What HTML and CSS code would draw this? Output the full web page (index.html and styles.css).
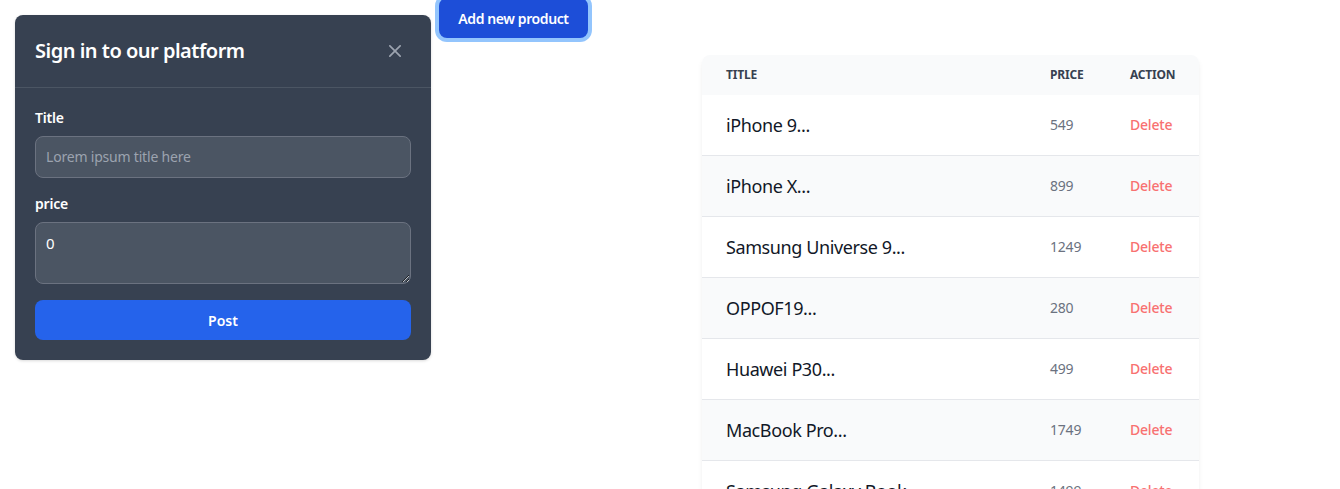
FILE: index.html
```html
<!DOCTYPE html>
<html lang="en">
<head>
<meta charset="utf-8">
<title>Products</title>
<link rel="stylesheet" href="styles.css">
</head>
<body>
<div class="page">
  <div class="modal">
    <div class="modal-header">
      <h3 class="modal-title">Sign in to our platform</h3>
      <button class="close-btn" type="button" aria-label="Close">
        <svg viewBox="0 0 14 14" width="12" height="12" fill="none" stroke="currentColor" stroke-width="2" stroke-linecap="round" stroke-linejoin="round"><path d="M1 1l12 12M13 1L1 13"/></svg>
      </button>
    </div>
    <form class="modal-body">
      <div class="field">
        <label class="label" for="title">Title</label>
        <input class="input" id="title" type="text" placeholder="Lorem ipsum title here">
      </div>
      <div class="field">
        <label class="label" for="price">price</label>
        <textarea class="input textarea" id="price" rows="2">0</textarea>
      </div>
      <button class="post-btn" type="button">Post</button>
    </form>
  </div>

  <button class="add-btn" type="button">Add new product</button>

  <div class="table-wrap">
    <table class="table">
      <colgroup><col class="c-title"><col class="c-price"><col class="c-action"></colgroup>
      <thead>
        <tr><th>Title</th><th>Price</th><th>Action</th></tr>
      </thead>
      <tbody>
        <tr><td class="name">iPhone 9...</td><td>549</td><td><a class="del">Delete</a></td></tr>
        <tr><td class="name">iPhone X...</td><td>899</td><td><a class="del">Delete</a></td></tr>
        <tr><td class="name">Samsung Universe 9...</td><td>1249</td><td><a class="del">Delete</a></td></tr>
        <tr><td class="name">OPPOF19...</td><td>280</td><td><a class="del">Delete</a></td></tr>
        <tr><td class="name">Huawei P30...</td><td>499</td><td><a class="del">Delete</a></td></tr>
        <tr><td class="name">MacBook Pro...</td><td>1749</td><td><a class="del">Delete</a></td></tr>
        <tr><td class="name">Samsung Galaxy Book...</td><td>1499</td><td><a class="del">Delete</a></td></tr>
      </tbody>
    </table>
  </div>
</div>
</body>
</html>
```

FILE: styles.css
```css
* { box-sizing: border-box; }
html, body { margin: 0; padding: 0; overflow: hidden; background: #fff; }
body { font-family: "Noto Sans", "Open Sans", Arial, sans-serif; }

.page {
  display: flex;
  align-items: flex-start;
  padding: 15px;
}

.modal {
  width: 416px;
  flex: none;
  background: #374151;
  border-radius: 8px;
  box-shadow: 0 1px 3px rgba(0,0,0,0.15);
}
.modal-header {
  display: flex;
  align-items: center;
  justify-content: space-between;
  padding: 20px;
  border-bottom: 1px solid #4b5563;
}
.modal-title {
  margin: 0;
  font-size: 20px;
  line-height: 28px;
  font-weight: 600;
  letter-spacing: -0.5px;
  color: #fff;
}
.close-btn {
  width: 32px;
  height: 32px;
  display: flex;
  align-items: center;
  justify-content: center;
  background: transparent;
  border: 0;
  border-radius: 8px;
  color: #9ca3af;
  padding: 0;
}
.modal-body {
  padding: 20px;
  margin: 0;
}
.field { margin-bottom: 16px; }
.label {
  display: block;
  margin-bottom: 8px;
  font-size: 14px;
  line-height: 20px;
  font-weight: 600;
  letter-spacing: -0.2px;
  color: #fff;
}
.input {
  display: block;
  width: 100%;
  padding: 10px;
  font-family: inherit;
  font-size: 14px;
  line-height: 20px;
  color: #fff;
  background: #4b5563;
  border: 1px solid #6b7280;
  border-radius: 8px;
  outline: none;
  margin: 0;
  letter-spacing: -0.2px;
}
.input::placeholder { color: #9ca3af; }
.textarea { resize: vertical; height: 62px; font-size: 15px; }
.post-btn {
  display: block;
  width: 100%;
  height: 40px;
  border: 0;
  border-radius: 8px;
  background: #2563eb;
  color: #fff;
  font-family: inherit;
  font-size: 14px;
  font-weight: 600;
}

.add-btn {
  flex: none;
  margin-left: 8px;
  margin-top: -17px;
  width: 149px;
  height: 40px;
  border: 0;
  border-radius: 8px;
  background: #1d4ed8;
  color: #fff;
  font-family: inherit;
  font-size: 14px;
  font-weight: 600;
  letter-spacing: -0.4px;
  box-shadow: 0 0 0 4px #93c5fd;
  padding: 0;
}

.table-wrap {
  flex: none;
  margin-left: 114px;
  margin-top: 40px;
  width: 497px;
  border-radius: 8px;
  overflow: hidden;
  box-shadow: 0 4px 6px -1px rgba(0,0,0,0.08), 0 2px 4px -2px rgba(0,0,0,0.06);
}
.table {
  width: 100%;
  border-collapse: collapse;
  table-layout: fixed;
  font-size: 14px;
  color: #6b7280;
  text-align: left;
}
.c-title { width: 324px; }
.c-price { width: 80px; }
.c-action { width: 93px; }
.table thead { background: #f9fafb; }
.table th {
  padding: 12px 24px;
  font-size: 12px;
  line-height: 16px;
  font-weight: 700;
  letter-spacing: -0.2px;
  text-transform: uppercase;
  color: #374151;
}
.table td {
  padding: 16px 24px;
  line-height: 28px;
  white-space: nowrap;
  letter-spacing: -0.2px;
}
.table tbody tr { border-bottom: 1px solid #e5e7eb; background: #fff; }
.table tbody tr:nth-child(even) { background: #f9fafb; }
.table td.name {
  font-size: 18px;
  letter-spacing: -0.4px;
  color: #111827;
}
.del {
  color: #f87171;
  font-weight: 500;
}
```
